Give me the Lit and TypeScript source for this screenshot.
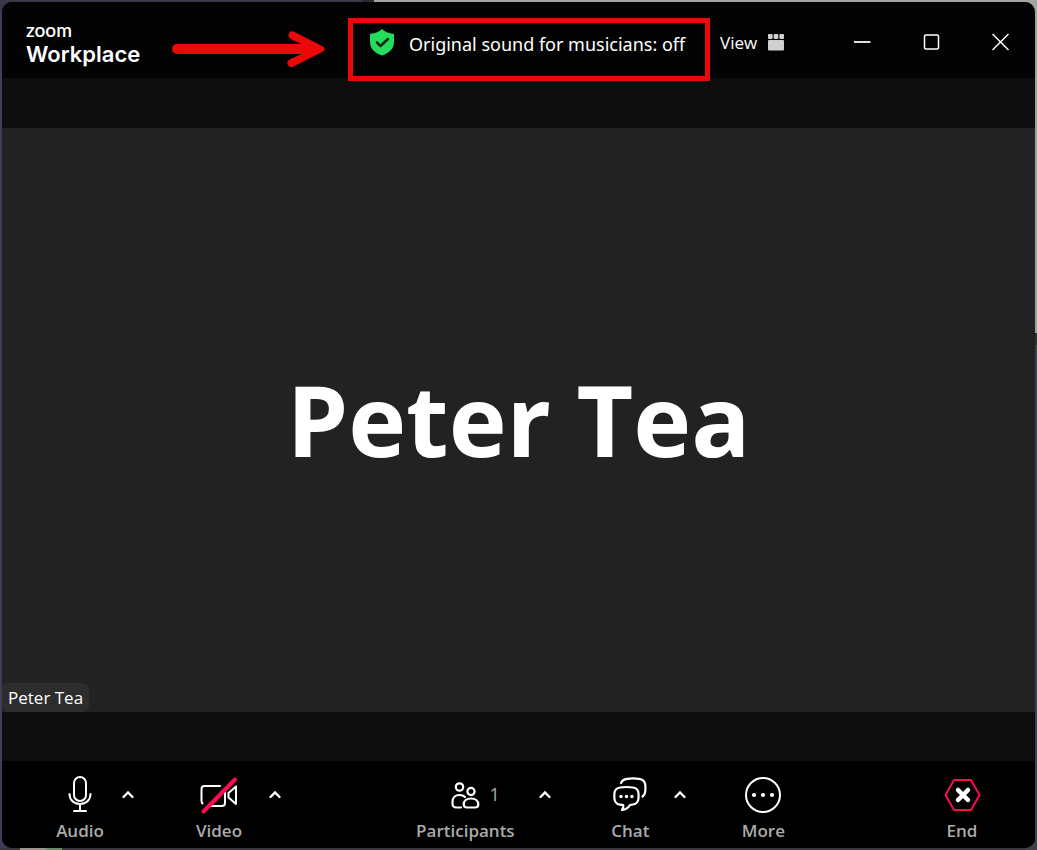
import { LitElement, html, css } from "lit";
import { customElement, property } from "lit/decorators.js";

const icons: Record<string, unknown> = {
  audio: html`<svg width="40" height="40" viewBox="0 0 40 40" aria-hidden="true">
    <g fill="none" stroke="#fff" stroke-width="2" stroke-linecap="round">
      <rect x="14" y="2" width="12" height="24" rx="6" />
      <path d="M9.500 19c0 6 4.500 10 10.500 10s10.500-4 10.500-10M20 29v7M14 36h12" />
    </g>
  </svg>`,
  video: html`<svg width="40" height="40" viewBox="0 0 40 40" aria-hidden="true">
    <g fill="none" stroke="#fff" stroke-width="2" stroke-linecap="round" stroke-linejoin="round">
      <path d="M21 11H5.500a3 3 0 0 0-3 3v11.500q0 2 1 3M26 17v11a3 3 0 0 1-3 3H12M37 11.500v17.500L29.500 22.500v-4.500z" />
      <path d="M4.500 36.500L36 4.500" stroke="#ff0a52" stroke-width="4" />
    </g>
  </svg>`,
  participants: html`<svg width="40" height="40" viewBox="0 0 40 40" aria-hidden="true">
    <g fill="none" stroke="#fff" stroke-width="2.200" stroke-linecap="round">
      <circle cx="14.500" cy="12" r="3.700" />
      <circle cx="26" cy="16.500" r="3.600" />
      <path d="M16 32.500H11a3.500 3.500 0 0 1-3.500-3.500v-2c0-4.500 3-7 7-7 2.500 0 4.300.700 5.500 2" />
      <path d="M22 32.500c-2 0-3.300-1.200-3.300-3 0-3.500 3-6 7.300-6s7.300 2.500 7.300 6c0 1.800-1.300 3-3.300 3z" />
    </g>
  </svg>`,
  chat: html`<svg width="40" height="40" viewBox="0 0 40 40" aria-hidden="true">
    <g fill="none" stroke="#fff" stroke-width="2.200" stroke-linecap="round" stroke-linejoin="round">
      <path d="M11 8c1-2.600 3-3.800 6-4.200 4-.500 8-.500 12 0 4 .500 6 2.500 6.300 6.200.200 2.500.200 4 0 6-.200 2.500-1.200 4.500-2.800 5.500" />
      <path d="M10 12.500c4-.600 9-.600 13 0 3.500.500 5.300 2.500 5.500 6 .100 2 .100 3.500 0 5-.300 3.500-2 5.500-5.500 6l-3 .500c-1.500 2.500-4 4.500-8 5 1-1.300 1.500-3 1.300-4.800L10 29.700c-3.500-.500-5.300-2.700-5.600-6.200a35 35 0 0 1 0-5c.300-3.500 2.100-5.500 5.600-6z" />
    </g>
    <g fill="#fff"><circle cx="11" cy="21.500" r="1.700" /><circle cx="16.500" cy="21.500" r="1.700" /><circle cx="22" cy="21.500" r="1.700" /></g>
  </svg>`,
  more: html`<svg width="40" height="40" viewBox="0 0 40 40" aria-hidden="true">
    <circle cx="20" cy="20" r="17" fill="none" stroke="#fff" stroke-width="2" />
    <g fill="#fff"><circle cx="11" cy="20" r="2.100" /><circle cx="20" cy="20" r="2.100" /><circle cx="29" cy="20" r="2.100" /></g>
  </svg>`,
  end: html`<svg width="40" height="40" viewBox="0 0 40 40" aria-hidden="true">
    <path d="M12 5h17l8.500 15-8.500 15H12L3.500 20z" fill="none" stroke="#ff0a52" stroke-width="2" stroke-linejoin="round" />
    <path d="M16 15l10 10M26 15l-10 10" stroke="#fff" stroke-width="4.500" stroke-linecap="round" />
  </svg>`,
};

@customElement("tool-button")
class ToolButton extends LitElement {
  @property() icon = "";
  @property() label = "";
  @property() count = "";
  @property({ type: Boolean }) menu = false;

  static styles = css`
    :host {
      display: flex;
      align-items: flex-start;
    }
    button {
      margin: 0;
      padding: 0;
      border: 0;
      background: none;
      color: #ababab;
      font: 600 17px/24px "Open Sans", "Noto Sans", sans-serif;
      cursor: pointer;
    }
    .tool {
      display: flex;
      flex-direction: column;
      align-items: center;
      gap: 4px;
      width: 76px;
    }
    .video {
      width: 92px;
    }
    .participants {
      width: 140px;
    }
    .chat {
      width: 80px;
    }
    .top {
      display: flex;
      align-items: center;
      height: 40px;
    }
    .count {
      width: 0;
      padding-bottom: 2px;
      font-weight: 400;
      font-size: 18px;
      text-indent: 4px;
    }
    .chevron {
      display: grid;
      place-items: center;
      width: 20px;
      height: 40px;
    }
    svg {
      display: block;
    }
  `;

  render() {
    return html`
      <button class="tool ${this.icon}">
        <span class="top">
          ${icons[this.icon]}${this.count ? html`<span class="count">${this.count}</span>` : ""}
        </span>
        <span>${this.label}</span>
      </button>
      ${this.menu
        ? html`<button class="chevron" aria-label="${this.label} options">
            <svg width="14" height="10" viewBox="0 0 14 10" aria-hidden="true">
              <path d="M2.500 7L7 2.500l4.500 4.500" fill="none" stroke="#fff" stroke-width="2.400" stroke-linecap="round" />
            </svg>
          </button>`
        : ""}
    `;
  }
}

@customElement("app-root")
class AppRoot extends LitElement {
  static styles = css`
    :host {
      display: flex;
      box-sizing: border-box;
      min-height: 100vh;
      padding: 2px;
      font-family: "Open Sans", "Noto Sans", sans-serif;
      color: #fff;
      background:
        linear-gradient(90deg, #393748 362px, #2c2c2c 362px 374px, #a5a5a0 374px) top / 100% 12px no-repeat,
        linear-gradient(#a09f99 333px, #2e2e2e 333px 345px, #414046 345px) right / 12px 100% no-repeat,
        linear-gradient(90deg, #38363d 20px, #99958c 20px 44px, #5f8f68 48px 62px, #38363d 62px) bottom / 100% 2px no-repeat,
        #423d56;
    }
    .window {
      flex: 1;
      display: flex;
      flex-direction: column;
      min-width: 0;
      border-radius: 10px;
      overflow: hidden;
      background: #0d0d0d;
    }
    button {
      margin: 0;
      padding: 0;
      border: 0;
      background: none;
      color: #fff;
      font-family: inherit;
      cursor: pointer;
    }
    svg {
      display: block;
    }
    .titlebar {
      display: flex;
      align-items: flex-start;
      height: 76px;
      background: #030303;
    }
    .brand {
      display: flex;
      flex-direction: column;
      width: 146px;
      padding: 16px 0 0 24px;
      font-family: Inter, sans-serif;
      font-weight: 600;
      font-size: 22px;
      line-height: 26px;
    }
    .maker {
      font-family: Lato, sans-serif;
      font-size: 19px;
      line-height: 23px;
    }
    .arrow {
      margin: 28px 21px 0 0;
    }
    .sound {
      position: relative;
      z-index: 1;
      display: flex;
      align-items: flex-start;
      gap: 15px;
      box-sizing: border-box;
      width: 362px;
      height: 63px;
      margin-top: 16px;
      padding: 6px 0 0 17px;
      border: 5px solid #ea0808;
      font-family: "Noto Sans", sans-serif;
      font-size: 18px;
      line-height: 30px;
      white-space: nowrap;
    }
    .view {
      display: flex;
      align-items: center;
      gap: 11px;
      height: 40px;
      margin: 20px auto 0 10px;
      font-size: 17px;
    }
    .controls {
      display: flex;
      margin-top: 20px;
    }
    .control {
      display: grid;
      place-items: center;
      width: 69px;
      height: 40px;
    }
    .stage {
      flex: 1;
      display: flex;
      padding: 50px 0 49px;
    }
    .tile {
      flex: 1;
      display: grid;
      grid-template-rows: 26px 1fr 29px;
      background: #222;
    }
    .name {
      grid-row: 2;
      place-self: center;
      margin: 0;
      font-size: 98px;
      font-weight: 700;
      line-height: 120px;
    }
    .tag {
      grid-row: 3;
      justify-self: start;
      padding: 0 6px;
      border-radius: 6px;
      background: #2d2d2d;
      font-size: 17px;
      line-height: 29px;
    }
    .toolbar {
      display: flex;
      box-sizing: border-box;
      height: 87px;
      padding: 14px 35px 0 40px;
      background: #000;
    }
    .cluster {
      display: flex;
      gap: 35px;
    }
    .before {
      flex: 9;
    }
    .after {
      flex: 10;
    }
  `;

  render() {
    return html`
      <main class="window">
        <header class="titlebar">
          <div class="brand"><span class="maker">zoom</span><span>Workplace</span></div>
          <svg class="arrow" width="155" height="38" viewBox="0 0 155 38" aria-hidden="true">
            <path d="M5 14h124.500L118 8.500a4 4 0 0 1 3.500-7L151 16.500q3.500 2.500 0 5L121.500 36.500a4 4 0 0 1-4-7L129.500 24H5a5 5 0 0 1 0-10z" fill="#ea0808" />
          </svg>
          <button class="sound">
            <svg width="24" height="27" viewBox="0 0 24 27" aria-hidden="true">
              <path d="M12 0c2.500 2.500 6.500 4.200 12 5v8c0 6.500-4.500 11-12 13.500C4.500 24 0 19.500 0 13V5c5.500-.800 9.500-2.500 12-5z" fill="#25dc5c" />
              <path d="M7 13.500l3.500 3.500 7.500-7" fill="none" stroke="#06290f" stroke-width="2.500" stroke-linecap="round" stroke-linejoin="round" />
            </svg>
            <span>Original sound for musicians: off</span>
          </button>
          <button class="view">
            <span>View</span>
            <svg width="16" height="17" viewBox="0 0 16 17" fill="#cfcfcf" aria-hidden="true">
              <rect width="4.600" height="5" rx="1" /><rect x="5.700" width="4.600" height="5" rx="1" /><rect x="11.400" width="4.600" height="5" rx="1" />
              <rect y="6" width="16" height="10.500" rx="1" />
            </svg>
          </button>
          <div class="controls">
            <button class="control" aria-label="Minimize">
              <svg width="18" height="18" viewBox="0 0 18 18"><path d="M0 9h16.500" stroke="#ddd" stroke-width="2" /></svg>
            </button>
            <button class="control" aria-label="Maximize">
              <svg width="18" height="18" viewBox="0 0 18 18"><rect x="1.500" y="2" width="14" height="14" rx="1.500" fill="none" stroke="#fff" stroke-width="1.500" /></svg>
            </button>
            <button class="control" aria-label="Close">
              <svg width="18" height="18" viewBox="0 0 18 18"><path d="M.500 1l16 16M16.500 1l-16 16" stroke="#fff" stroke-width="1.500" /></svg>
            </button>
          </div>
        </header>
        <section class="stage">
          <div class="tile">
            <h1 class="name">Peter Tea</h1>
            <span class="tag">Peter Tea</span>
          </div>
        </section>
        <nav class="toolbar" aria-label="Meeting controls">
          <div class="cluster">
            <tool-button icon="audio" label="Audio" menu></tool-button>
            <tool-button icon="video" label="Video" menu></tool-button>
          </div>
          <div class="before"></div>
          <div class="cluster">
            <tool-button icon="participants" label="Participants" count="1" menu></tool-button>
            <tool-button icon="chat" label="Chat" menu></tool-button>
            <tool-button icon="more" label="More"></tool-button>
          </div>
          <div class="after"></div>
          <tool-button icon="end" label="End"></tool-button>
        </nav>
      </main>
    `;
  }
}
